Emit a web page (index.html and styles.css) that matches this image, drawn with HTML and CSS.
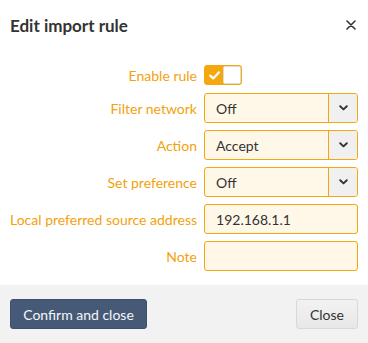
FILE: index.html
```html
<!DOCTYPE html>
<html>
<head>
<meta charset="utf-8">
<link rel="stylesheet" href="styles.css">
</head>
<body>
<div class="modal">
  <div class="modal-header">
    <h1 class="title">Edit import rule</h1>
    <svg class="close-x" width="10" height="10" viewBox="0 0 10 10"><path d="M1 1 L9 9 M9 1 L1 9" stroke="#333" stroke-width="1.6" stroke-linecap="round"/></svg>
  </div>
  <div class="modal-body">
    <div class="row row-toggle">
      <label class="lbl">Enable rule</label>
      <div class="ctl">
        <div class="toggle">
          <span class="toggle-on"><svg width="11" height="9" viewBox="0 0 11 9"><path d="M1.2 4.6 L4.2 7.4 L9.8 1.4" fill="none" stroke="#fff" stroke-width="2.2" stroke-linecap="round" stroke-linejoin="round"/></svg></span>
          <span class="toggle-knob"></span>
        </div>
      </div>
    </div>
    <div class="row">
      <label class="lbl">Filter network</label>
      <div class="ctl select"><span class="sel-val">Off</span><span class="sel-btn"><svg width="9" height="6" viewBox="0 0 9 6"><path d="M1.2 1.2 L4.5 4.4 L7.8 1.2" fill="none" stroke="#333" stroke-width="1.9" stroke-linecap="round" stroke-linejoin="round"/></svg></span></div>
    </div>
    <div class="row">
      <label class="lbl">Action</label>
      <div class="ctl select"><span class="sel-val">Accept</span><span class="sel-btn"><svg width="9" height="6" viewBox="0 0 9 6"><path d="M1.2 1.2 L4.5 4.4 L7.8 1.2" fill="none" stroke="#333" stroke-width="1.9" stroke-linecap="round" stroke-linejoin="round"/></svg></span></div>
    </div>
    <div class="row">
      <label class="lbl">Set preference</label>
      <div class="ctl select"><span class="sel-val">Off</span><span class="sel-btn"><svg width="9" height="6" viewBox="0 0 9 6"><path d="M1.2 1.2 L4.5 4.4 L7.8 1.2" fill="none" stroke="#333" stroke-width="1.9" stroke-linecap="round" stroke-linejoin="round"/></svg></span></div>
    </div>
    <div class="row">
      <label class="lbl">Local preferred source address</label>
      <div class="ctl input">192.168.1.1</div>
    </div>
    <div class="row">
      <label class="lbl">Note</label>
      <div class="ctl input"></div>
    </div>
  </div>
  <div class="modal-footer">
    <button class="btn btn-primary">Confirm and close</button>
    <button class="btn btn-default">Close</button>
  </div>
</div>
</body>
</html>
```

FILE: styles.css
```css
html, body {
  margin: 0;
  padding: 0;
  background: #fff;
}
body {
  font-family: Lato, "Open Sans", sans-serif;
  font-size: 14px;
  color: #333;
}
.modal {
  width: 368px;
  height: 343px;
  display: flex;
  flex-direction: column;
  overflow: hidden;
}
.modal-header {
  height: 52px;
  display: flex;
  align-items: center;
  justify-content: space-between;
  padding: 0 12px 0 10px;
  box-sizing: border-box;
}
.title {
  margin: 0;
  font-size: 17px;
  font-weight: 700;
  color: #333;
}
.close-x {
  display: block;
  margin-top: -1px;
}
.modal-body {
  padding: 14px 10px 14px 10px;
  display: flex;
  flex-direction: column;
  gap: 7px;
}
.row {
  display: grid;
  grid-template-columns: 1fr 154px;
  column-gap: 7px;
  align-items: center;
  height: 30px;
}
.row-toggle {
  height: 20px;
  margin-bottom: 1px;
}
.lbl {
  text-align: right;
  white-space: nowrap;
  color: #f2a20c;
  font-size: 14px;
}
.toggle {
  display: flex;
  width: 38px;
  height: 20px;
  border: 1px solid #f5a70f;
  border-radius: 3px;
  box-sizing: border-box;
  background: #f5a70f;
  overflow: hidden;
}
.toggle-on {
  width: 18px;
  display: flex;
  align-items: center;
  justify-content: center;
}
.toggle-knob {
  flex: 1;
  background: #fff;
  border: 1px solid #ddd;
  border-radius: 2px;
}
.select, .input {
  height: 30px;
  box-sizing: border-box;
  border: 1px solid #f5a70f;
  border-radius: 3px;
  background: #fff8e9;
  display: flex;
  align-items: center;
  color: #333;
}
.input {
  padding-left: 11px;
}
.sel-val {
  flex: 1;
  padding-left: 11px;
}
.sel-btn {
  width: 28px;
  align-self: stretch;
  border-left: 1px solid #f5a70f;
  background: #f0f0f0;
  display: flex;
  align-items: center;
  justify-content: center;
  border-radius: 0 2px 2px 0;
}
.modal-footer {
  flex: 1;
  background: #f2f2f2;
  display: flex;
  justify-content: space-between;
  align-items: flex-start;
  padding: 14px 10px;
}
.btn {
  height: 30px;
  font-family: Lato, "Open Sans", sans-serif;
  font-size: 14px;
  font-weight: 400;
  border-radius: 3px;
  padding: 0 12px;
  cursor: pointer;
}
.btn-primary {
  width: 137px;
  background: #465a78;
  border: 1px solid #3e506b;
  color: #f4f6f9;
}
.btn-default {
  width: 62px;
  background: linear-gradient(#f2f2f2, #e8e8e8);
  border: 1px solid #d8d8d8;
  color: #333;
}
```
